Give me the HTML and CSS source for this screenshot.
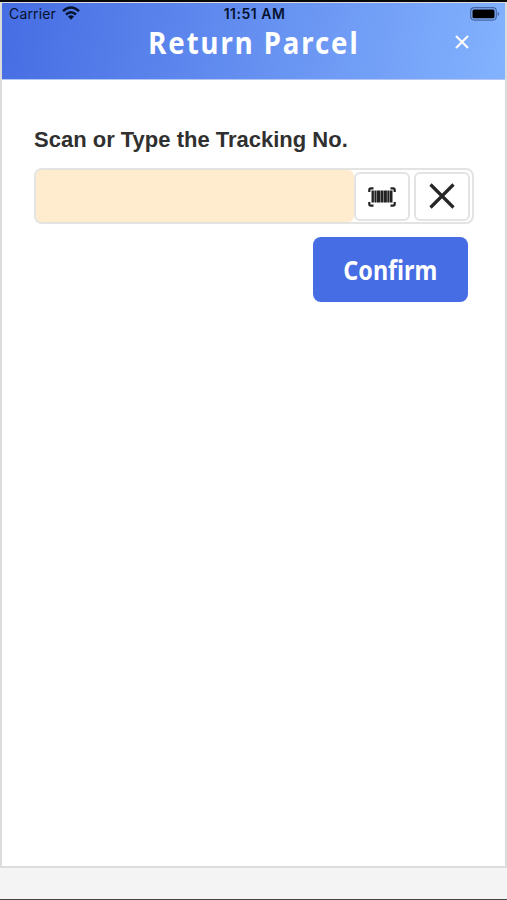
FILE: index.html
```
<!DOCTYPE html>
<html lang="en">
<head>
<meta charset="utf-8">
<title>Return Parcel</title>
<link rel="stylesheet" href="styles.css">
</head>
<body>
<div class="screen">
  <header class="header">
    <div class="status">
      <div class="carrier"><span>Carrier</span>
        <svg class="wifi" viewBox="0 0 18 14" width="18" height="14">
          <g fill="none" stroke="#06122e" stroke-width="2.4"><path d="M1 5.2Q9-2.2 17 5.2"/><path d="M4 8.5Q9 4 14 8.5"/></g>
          <path d="M6 10.5Q9 8 12 10.5L9 13.7Z" fill="#06122e"/>
        </svg>
      </div>
      <time class="time">11:51 AM</time>
      <svg class="battery" viewBox="0 0 31 14" width="31" height="14">
        <rect x=".7" y=".7" width="25.6" height="12.4" rx="3.5" fill="none" stroke="#4668a8" stroke-width="1.2"/>
        <rect x="2.5" y="2.5" width="22" height="8.8" rx="1.5" fill="#000"/>
        <path d="M27.7 4.8Q31 7 27.7 9.2Z" fill="#4668a8"/>
      </svg>
    </div>
    <div class="titlebar">
      <h1 class="title">Return Parcel</h1>
      <svg class="close" viewBox="0 0 14 14" width="14" height="14"><path d="M1 1L13 13M13 1L1 13" stroke="#fff" stroke-width="2.1"/></svg>
    </div>
  </header>
  <main class="content">
    <label class="label" for="tracking">Scan or Type the Tracking No.</label>
    <div class="field">
      <input class="input" id="tracking" type="text">
      <button class="tool" aria-label="Scan">
        <svg class="barcode" viewBox="0 0 28 20" width="28" height="20">
          <path d="M1.3 5V3Q1.3 1.3 3 1.3H5.5M22.5 1.3H25Q26.7 1.3 26.7 3V5M26.7 15V17Q26.7 18.7 25 18.7H22.5M5.5 18.7H3Q1.3 18.7 1.3 17V15" fill="none" stroke="#222" stroke-width="2.2"/>
          <path d="M3.5 3.5h2.4v12h-2.4zM6.4 3.5h1.8v12h-1.8zM8.6 3.5h3.6v12h-3.6zM12.6 3.5h2.5v12h-2.5zM15.5 3.5h3.4v12h-3.4zM19.3 3.5h1.8v12h-1.8zM21.5 3.5h3v12h-3z" fill="#222"/>
        </svg>
      </button>
      <button class="tool" aria-label="Clear">
        <svg viewBox="0 0 26 26" width="26" height="26"><path d="M1.5 1.5L24.5 24.5M24.5 1.5L1.5 24.5" stroke="#262626" stroke-width="3.2"/></svg>
      </button>
    </div>
    <button class="confirm"><span>Confirm</span></button>
  </main>
</div>
<footer class="footer"></footer>
</body>
</html>
```
FILE: styles.css
```
* { box-sizing: border-box; }
body { margin: 0; height: 900px; display: flex; flex-direction: column; background: #f4f4f4; border-top: 2px solid #080808; border-bottom: 1px solid #444; overflow: hidden; }
.screen { height: 866px; flex: none; display: flex; flex-direction: column; background: #fff; border: solid #dcdcdc; border-width: 1px 2px 2px; }
.header { height: 77px; flex: none; background: linear-gradient(100deg, #466de3, #83b2fe); border-bottom: 1px solid #b3c7f2; }
.status { height: 22px; display: grid; grid-template-columns: 1fr auto 1fr; align-items: center; padding: 0 5px 0 7px; font: 14px/20px Inter, sans-serif; color: #06122e; }
.carrier { display: flex; align-items: center; gap: 6px; letter-spacing: .15px; }
.wifi { margin-top: -2px; }
.time { font-weight: 600; letter-spacing: .5px; }
.battery { justify-self: end; margin: -1px -1px 0 0; }
.titlebar { height: 35px; display: grid; grid-template-columns: 1fr auto 1fr; align-items: center; }
.title { grid-column: 2; margin: 0; font: 700 30px/36px "Noto Sans", sans-serif; letter-spacing: 2.1px; color: #fff; transform: scaleX(.92); white-space: nowrap; }
.close { justify-self: end; margin: -2px 36px 0 0; }
.content { padding: 47px 31px 0 32px; display: flex; flex-direction: column; }
.label { font: 700 22px/26px "Liberation Sans", sans-serif; color: #303030; white-space: nowrap; }
.field { height: 56px; margin-top: 15px; display: flex; align-items: center; gap: 4px; padding-right: 2px; border: 2px solid #e3e3e1; border-radius: 8px; }
.input { flex: 1; min-width: 0; height: 52px; margin-right: -4px; padding: 0 12px; border: 0; border-radius: 6px; background: #ffebcd; font: 22px "Liberation Sans", sans-serif; outline: 0; }
.tool { width: 56px; height: 49px; flex: none; display: flex; align-items: center; justify-content: center; padding: 0; background: #fff; border: 2px solid #e3e3e3; border-radius: 6px; }
.barcode { margin-top: 2px; }
.confirm { align-self: flex-end; width: 155px; height: 65px; margin: 13px 6px 0 0; padding: 0; border: 0; border-radius: 8px; background: #466de3; color: #fff; font: 700 27.5px/65px "Noto Sans", sans-serif; }
.confirm span { display: inline-block; transform: scaleX(.85); }
.footer { flex: 1; }
```
